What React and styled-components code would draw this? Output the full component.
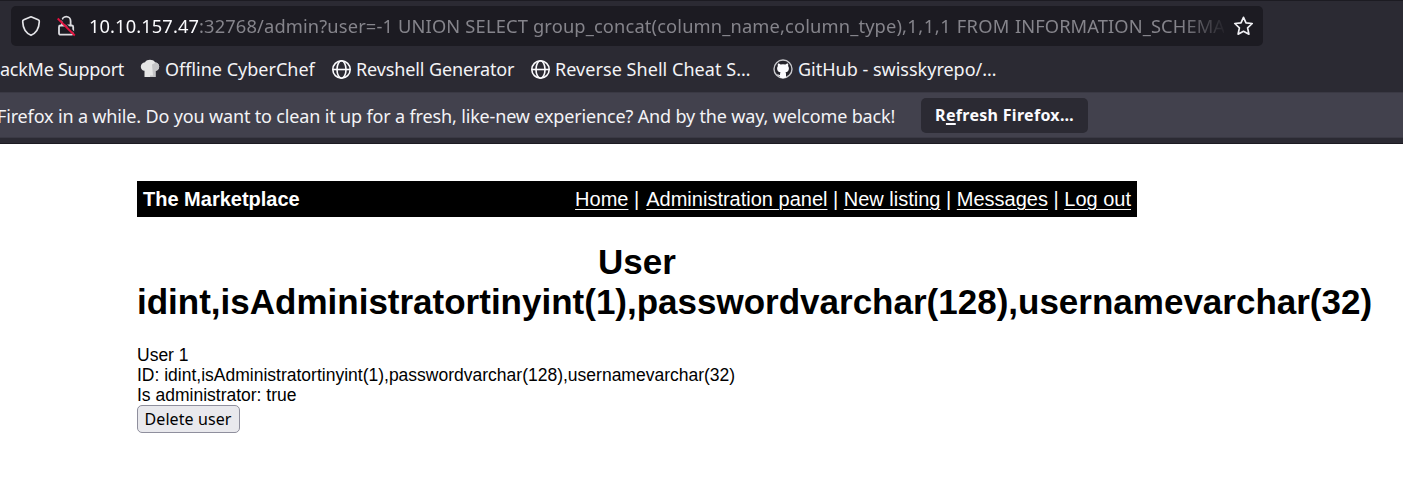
import React from 'react';
import styled, { createGlobalStyle } from 'styled-components';

const GlobalStyle = createGlobalStyle`
  *, *::before, *::after { box-sizing: border-box; }
  body { margin: 0; background: #fff; overflow: hidden; }
`;

const ui = '"Noto Sans", "Open Sans", sans-serif';
const web = '"Liberation Sans", Arial, sans-serif';

const Window = styled.div`
  width: 1403px;
  height: 487px;
  overflow: hidden;
  background: #fff;
`;

const Chrome = styled.header`
  height: 144px;
  display: flex;
  flex-direction: column;
  background: #2b2a33;
  border-top: 1px solid #1c1b22;
  border-bottom: 1px solid #1c1b22;
  color: #f3f3f6;
  font-family: ${ui};
`;

const UrlBar = styled.div`
  display: flex;
  align-items: center;
  flex: none;
  width: 1252px;
  height: 40px;
  margin: 5px 0 0 11px;
  padding: 0 9px 0 10px;
  border-radius: 5px;
  background: #1c1b22;
`;

const UrlIcon = styled.svg`
  flex: none;
  width: 20px;
  height: 22px;
  margin-right: ${(p) => p.$gap || 0}px;
`;

const Url = styled.div`
  flex: none;
  width: 1135px;
  margin-right: 9px;
  overflow: hidden;
  white-space: pre;
  font-size: 18.3px;
  line-height: 32px;
  color: #85848b;
  mask-image: linear-gradient(to right, #000 1092px, transparent 1139px);
`;

const UrlPart = styled.span`
  color: ${(p) => (p.$host ? '#fbfbfe' : 'inherit')};
  letter-spacing: ${(p) => p.$track}px;
`;

const Bookmarks = styled.nav`
  display: flex;
  align-items: center;
  flex: none;
  height: 46px;
`;

const Bookmark = styled.a`
  display: flex;
  align-items: center;
  flex: none;
  width: ${(p) => p.$width}px;
  white-space: nowrap;
  font-size: 18px;
  line-height: 28px;
  letter-spacing: ${(p) => p.$track || 0}px;
`;

const BookmarkIcon = styled.svg`
  flex: none;
  width: 20px;
  height: 20px;
  margin-right: 5px;
`;

const Notice = styled.div`
  display: flex;
  align-items: center;
  flex: none;
  height: 46px;
  background: #42414d;
  border-top: 1px solid #3a3944;
  border-bottom: 1px solid #3a3944;
`;

const NoticeText = styled.div`
  flex: none;
  width: 924px;
  margin-left: -3px;
  padding-top: 1px;
  white-space: nowrap;
  font-size: 18px;
  line-height: 28px;
  letter-spacing: -0.155px;
`;

const RefreshButton = styled.button`
  width: 167px;
  height: 35px;
  padding: 0;
  border: 0;
  border-radius: 5px;
  background: #2b2a33;
  color: #fbfbfe;
  font: bold 16px/24px ${ui};
  letter-spacing: 0.3px;
`;

const AccessKey = styled.span`
  text-decoration: underline;
  text-decoration-thickness: 2px;
  text-underline-offset: 2px;
  text-decoration-skip-ink: none;
`;

const Page = styled.main`
  width: 1000px;
  margin: 37px 0 0 137px;
  color: #000;
  font: 17.5px/20px ${web};
`;

const SiteBar = styled.div`
  display: flex;
  align-items: center;
  justify-content: space-between;
  height: 36px;
  padding: 0 6px;
  background: #000;
  color: #fff;
  font-size: 20px;
  line-height: 24px;
`;

const SiteLink = styled.a`
  text-decoration: underline;
  text-decoration-thickness: 1px;
  text-underline-offset: 3px;
`;

const Divider = styled.span`
  margin-right: ${(p) => (p.$wide ? 1.5 : 0)}px;
`;

const Title = styled.h1`
  margin: 25px 0 23px;
  text-align: center;
  font-size: 35px;
  line-height: 40px;
`;

const DeleteButton = styled.button`
  display: block;
  width: 103px;
  height: 28px;
  padding: 0 1px 0 0;
  border: 1px solid #8f8f9d;
  border-radius: 5px;
  background: #e9e9ed;
  color: #000;
  font: 16px/24px ${ui};
  letter-spacing: 0.08px;
`;

const Globe = () => (
  <BookmarkIcon viewBox="0 0 20 20" fill="none" stroke="#fbfbfe" strokeWidth="1.6">
    <circle cx="10.500" cy="10.500" r="8.700" />
    <ellipse cx="10.500" cy="10.500" rx="4.500" ry="8.700" />
    <path d="M1.800 10.500h17.400" />
  </BookmarkIcon>
);

const ChefHat = () => (
  <BookmarkIcon viewBox="0 0 20 20">
    <path fill="#e6e6e6" d="M4.500 18v-6.200C2.300 11.500.8 9.900.8 7.700.8 5.300 2.500 3.300 5 3.200 6 1.500 8 .8 10 .8s4 .7 5 2.400c2.500.1 4.200 2.100 4.200 4.500 0 2.200-1.500 3.800-3.700 4.100V18z" />
    <path fill="#c4c4c6" d="M12 5.500l4-2c2 .6 3.200 2.200 3.200 4.200 0 2.200-1.500 3.800-3.700 4.100V18H10v-1.500h3z" />
  </BookmarkIcon>
);

const GitHub = () => (
  <BookmarkIcon viewBox="0 0 20 20">
    <circle cx="10" cy="10" r="9" fill="#24232b" stroke="#c9c9cd" strokeWidth="1.4" />
    <path fill="#fbfbfe" d="M5 4.500c1 0 2 .5 2.700 1a9 9 0 0 1 4.600 0c.7-.5 1.700-1 2.700-1 .4 1 .3 1.800.1 2.400.6.8.8 1.600.8 2.500 0 2.500-1.500 3.500-3.400 3.900.3.400.5 1 .5 1.700v3.600a9 9 0 0 1-6 0v-1.700c-1.700.2-2.200-.9-3-1.700.9-.2 1.500.8 2.600.7.2 0 .3-.1.400-.2 0-.8.1-1.600.5-2.400-2-.3-3.400-1.400-3.400-3.900 0-.9.200-1.700.8-2.500-.2-.6-.3-1.400.1-2.400z" />
  </BookmarkIcon>
);

const Shield = () => (
  <UrlIcon $gap={15} viewBox="0 0 20 22" fill="none" stroke="#e4e4e8" strokeWidth="1.7" strokeLinejoin="round">
    <path d="M10 1.800 17.200 4.800Q18.500 5.300 18.300 6.800C18 13.500 15 18.200 10 20.300 5 18.200 2 13.500 1.700 6.800Q1.500 5.300 2.800 4.800z" />
  </UrlIcon>
);

const InsecureLock = () => (
  <UrlIcon $gap={13} viewBox="0 0 20 22" fill="none" stroke="#dcdce0" strokeWidth="1.800">
    <path d="M6 10.500V6a4.300 4.300 0 0 1 8.600 0v4.500" />
    <rect x="3" y="10.500" width="14.200" height="9.200" rx="1.500" />
    <path stroke="#1c1b22" strokeWidth="1.500" d="M3.200 2.300 20 19.200" />
    <path stroke="#e2123f" strokeWidth="1.900" d="M1.700 3.500 18.800 20.500" />
  </UrlIcon>
);

const Star = () => (
  <UrlIcon viewBox="0 0 20 22" fill="none" stroke="#f0f0f4" strokeWidth="1.700" strokeLinejoin="round">
    <path d="M10.500 2.300 13 7.900 19.200 8.500 14.600 12.800 15.900 19.200 10.500 16.300 5.100 19.200 6.400 12.800 1.800 8.500 8 7.900z" />
  </UrlIcon>
);

const links = ['Home', 'Administration panel', 'New listing', 'Messages', 'Log out'];
const record = 'idint,isAdministratortinyint(1),passwordvarchar(128),usernamevarchar(32)';

export default function App() {
  return (
    <Window>
      <GlobalStyle />
      <Chrome>
        <UrlBar>
          <Shield />
          <InsecureLock />
          <Url>
            <UrlPart $host $track={0.1}>10.10.157.47</UrlPart>
            <UrlPart $track={0.14}>:32768/admin?user=-1 </UrlPart>
            <UrlPart $track={0.17}>UNION SELECT </UrlPart>
            <UrlPart $track={0.14}>group_concat(column_name,column_type),</UrlPart>
            <UrlPart $track={0.6}>1,1,1 </UrlPart>
            <UrlPart $track={0.35}>FROM </UrlPart>
            <UrlPart $track={0.1}>INFORMATION_SCHEMA</UrlPart>
          </Url>
          <Star />
        </UrlBar>
        <Bookmarks>
          <Bookmark $width={140} $track={-0.26}>ackMe Support</Bookmark>
          <Bookmark $width={191}><ChefHat />Offline CyberChef</Bookmark>
          <Bookmark $width={199} $track={-0.12}><Globe />Revshell Generator</Bookmark>
          <Bookmark $width={243} $track={0.05}><Globe />Reverse Shell Cheat S…</Bookmark>
          <Bookmark $width={230}><GitHub />GitHub - swisskyrepo/…</Bookmark>
        </Bookmarks>
        <Notice>
          <NoticeText>
            Firefox in a while. Do you want to clean it up for a fresh, like-new experience? And by the way, welcome back!
          </NoticeText>
          <RefreshButton>R<AccessKey>e</AccessKey>fresh Firefox…</RefreshButton>
        </Notice>
      </Chrome>
      <Page>
        <SiteBar>
          <b>The Marketplace</b>
          <div>
            {links.map((link, i) => (
              <React.Fragment key={link}>
                {i > 0 && <Divider $wide={i === 1}> | </Divider>}
                <SiteLink>{link}</SiteLink>
              </React.Fragment>
            ))}
          </div>
        </SiteBar>
        <Title>User {record}</Title>
        <div>User 1</div>
        <div>ID: {record}</div>
        <div>Is administrator: true</div>
        <DeleteButton>Delete user</DeleteButton>
      </Page>
    </Window>
  );
}
